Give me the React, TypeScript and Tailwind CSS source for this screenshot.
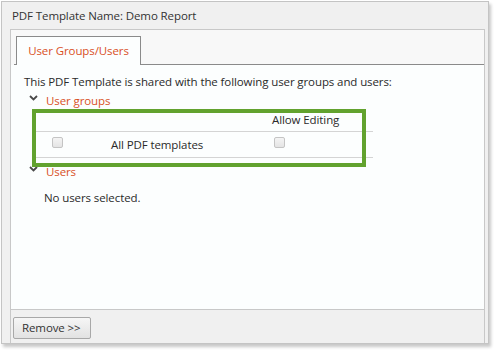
import React from "react";

const font = { fontFamily: '"Open Sans", "Noto Sans", Arial, sans-serif' };

function Chevron() {
  return (
    <svg width="9" height="6" viewBox="0 0 9 6" className="shrink-0">
      <path d="M1 1 L4.5 4.5 L8 1" fill="none" stroke="#4a4a4a" strokeWidth="1.8" />
    </svg>
  );
}

function Checkbox() {
  return (
    <span className="inline-block w-[11px] h-[11px] rounded-[2px] border border-[#c4c4c4] bg-gradient-to-b from-[#f4f4f4] to-[#e4e4e4]" />
  );
}

export default function App() {
  return (
    <div className="w-[498px] h-[353px] bg-white relative text-[11.5px] tracking-[-0.1px] text-[#2a2a2a]" style={font}>
      <div className="ml-[1px] mt-[1px] w-[488px] h-[343px] border border-[#c4c4c4] bg-[#f0f0f0] flex flex-col shadow-[2px_3px_3px_rgba(0,0,0,0.22)]">
        <div className="h-[27px] pl-[10px] flex items-center text-[#333]">
          PDF Template Name: Demo Report
        </div>
        <div className="ml-[8px] w-[475px] flex-1 flex flex-col border-t border-l border-r border-[#c8c8c8]">
          <div className="h-[35px] bg-[#f8f8f8] pl-[3px] pt-[6px] flex">
            <div className="flex-1 flex border-b border-[#8a8a8a]">
              <div className="ml-[2px] w-[125px] h-[29px] -mb-px border border-b-0 border-[#8a8a8a] bg-[#fcfefe] flex items-center justify-center text-[#d9501f]">
                User Groups/Users
              </div>
            </div>
          </div>
          <div className="h-[244px] bg-[#fcfefe] pl-[13px] pt-[9px]">
            <div className="h-[16px] leading-[16px]">
              This PDF Template is shared with the following user groups and users:
            </div>
            <div className="flex items-center gap-[8px] h-[17px] mt-[2px] pl-[5px] text-[#d9501f]">
              <span className="-mt-[6px]"><Chevron /></span>
              <span>User groups</span>
            </div>
            <div className="ml-[9px] w-[340px] mt-[2px]">
              <div className="h-[21px] border-b border-[#d4d4d4] flex items-center">
                <span className="ml-[239px] -mt-[2px]">Allow Editing</span>
              </div>
              <div className="h-[26px] border-b border-[#d4d4d4] flex items-center">
                <span className="ml-[19px] -mt-[5px] flex"><Checkbox /></span>
                <span className="ml-[48px]">All PDF templates</span>
                <span className="ml-[71px] -mt-[5px] flex"><Checkbox /></span>
              </div>
            </div>
            <div className="flex items-center gap-[8px] h-[17px] mt-[5px] pl-[5px] text-[#d9501f]">
              <span className="-mt-[6px]"><Chevron /></span>
              <span>Users</span>
            </div>
            <div className="mt-[10px] pl-[20px] h-[16px] leading-[16px]">No users selected.</div>
          </div>
          <div className="flex-1 border-t border-[#c8c8c8] bg-[#f0f0f0] pl-[2px] pt-[7px]">
            <button className="w-[78px] h-[22px] border border-[#a8a8a8] rounded-[2px] bg-gradient-to-b from-[#f6f6f6] to-[#e2e2e2] text-left pl-[8px] text-[11.5px] text-[#333] leading-none">
              Remove &gt;&gt;
            </button>
          </div>
        </div>
      </div>
      <div className="absolute left-[32px] top-[108px] w-[334px] h-[58px] border-4 border-[#62a22e]" />
    </div>
  );
}
